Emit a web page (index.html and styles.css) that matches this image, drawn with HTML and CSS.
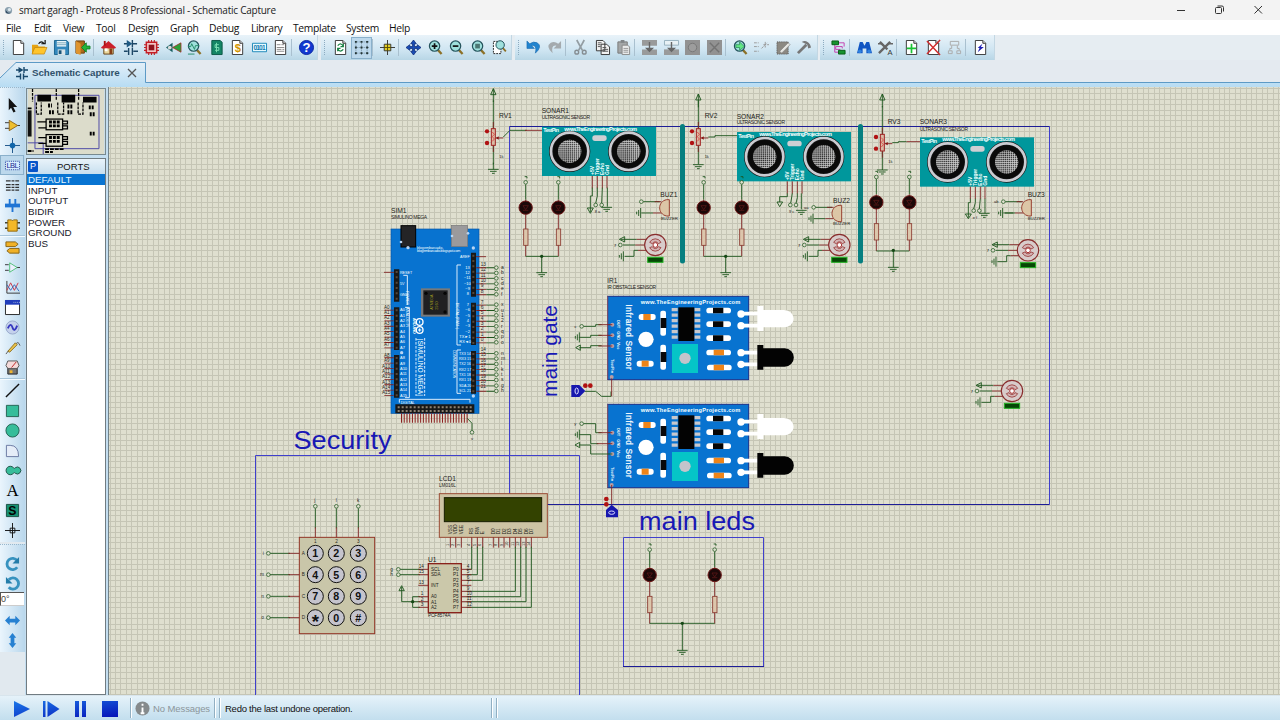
FILE: index.html
```html
<!DOCTYPE html>
<html lang="en">
<head>
<meta charset="utf-8">
<title>smart garagh - Proteus 8 Professional - Schematic Capture</title>
<link rel="stylesheet" href="styles.css">
</head>
<body>
<svg class="defs" width="0" height="0">
<defs>
<symbol id="page" viewBox="0 0 16 16"><path d="M2.5.5h8l3 3v12h-11z" fill="#fff" stroke="#333"/><path d="M10.5.5v3h3" fill="#ddd" stroke="#333"/></symbol>
<symbol id="lens" viewBox="0 0 16 16"><path d="M10 10l4.500 5" stroke="#8c7128" stroke-width="2.400"/><circle cx="7" cy="6.500" r="5.500" fill="#9fe0dc" stroke="#24535c" stroke-width="1.300"/></symbol>
<marker id="term" markerUnits="userSpaceOnUse" markerWidth="16" markerHeight="16" refX="8" refY="8"><circle cx="8" cy="8" r="5.500" fill="#dfdfcf" stroke="#1c551c" stroke-width="2.200"/></marker>
<g id="gnd"><path d="M-16 0H16M-10 6H10M-4 12H4" class="wire"/></g>
<g id="gndl"><path d="M0-15V15M-6-9V9M-12-4V4" class="wire"/></g>
<g id="up"><path d="M0 0l-8 18H8zM0 0V40" class="wire"/></g>
<g id="led"><path d="M0 6V52" class="wire"/><path d="M0 52V76M0 96V222" class="pin"/><circle r="5.500" class="term"/><circle cy="76" r="20" fill="#1c0808" stroke="#6b1515" stroke-width="3"/><path d="M-8 70H8L0 82zM-8 84H8" fill="none" stroke="#641919" stroke-width="2"/><rect x="-6" y="140" width="13" height="49" fill="#dcc6ac" stroke="#8a3a30" stroke-width="2.500"/><path d="M-3-17h7v5" class="wire"/></g>
<g id="rv"><path d="M0-110V-25M0 25V82" class="wire"/><path d="M0-45V45M7 3H30" class="pin"/><rect x="-6" y="-25" width="12" height="50" fill="#d9bba5" stroke="#a02222" stroke-width="3"/><path d="M-3-15L3-8L-3-1L3 6L-3 13" stroke="#d22" stroke-width="2" fill="none"/><circle cx="-19" cy="-17" r="6.500" fill="#b01212"/><circle cx="-19" cy="18" r="6.500" fill="#b01212"/><path d="M8 3l8-5v10z" fill="#811"/></g>
<g id="sonar">
<rect width="342" height="148" fill="#00979c"/>
<text x="67" y="12" class="sw b" font-size="17" textLength="218">www.TheEngineeringProjects.com</text><text x="4" y="17" class="sw b" font-size="16" textLength="47">TestPin</text>
<rect x="151" y="26" width="43" height="17" rx="8" fill="#cfcfd3"/>
<g id="eye"><circle cx="83" cy="74" r="56" fill="#0a0a0a" stroke="#1a1a1a" stroke-width="12"/><circle cx="83" cy="74" r="56" fill="none" stroke="#cbccd2" stroke-width="8"/><circle cx="83" cy="74" r="35" fill="#2a2a2a"/><circle cx="83" cy="74" r="35" fill="url(#mesh)"/></g><use href="#eye" x="177"/>
<g class="sw b" font-size="15"><text transform="translate(157 145)rotate(-90)">+5V</text><text transform="translate(172 145)rotate(-90)">Trigger</text><text transform="translate(187 145)rotate(-90)">Echo</text><text transform="translate(202 145)rotate(-90)">Gnd</text></g>
<path d="M151 148V185M166 148V185M181 148V185M195 148V185" class="pin"/>
</g>
<pattern id="mesh" width="6.200" height="6.200" patternUnits="userSpaceOnUse"><path d="M0 1.500H6.200M1.500 0V6.200" stroke="#d6d6d6" stroke-width="2"/></pattern>
<g id="buz"><circle r="5.500" class="term"/><path d="M6 0H55M0 34H35" class="wire"/><path d="M35 34H60M40 0H60" class="pin"/><use href="#gndl" x="-2" y="34"/><path d="M84-6V43H76C48 38 48-1 76-6z" fill="#dcc6a6" stroke="#984030" stroke-width="3"/></g>
<g id="motor"><path d="M-104-17H-56M-97 0H-60M-92 34H-64V16H-52" class="wire"/><path d="M-56-17H-25M-60 0H-32M-52 16H-26" class="pin"/><path d="M-108-17l16-8v16z" class="wire"/><circle cx="-105" r="5.500" class="term"/><text x="-124" y="5" font-size="12">7</text><use href="#gndl" x="-96" y="34"/><circle r="32" fill="#d8cccb" stroke="#892d2d" stroke-width="3.500"/><path d="M-17-8A19 19 0 0 1 17-8L9-4A10 10 0 0 0-9-4zM-17 8A19 19 0 0 0 17 8L9 5A10 10 0 0 1-9 5z" fill="#d5b3b3" stroke="#963939" stroke-width="2.500"/><circle r="7" fill="#fff" stroke="#a33" stroke-width="3"/><rect x="-23" y="37" width="46" height="15" fill="#064706" stroke="#23b323" stroke-width="3"/></g>
<g id="cap"><rect width="74" height="17" rx="8" fill="#fff"/></g>
<g id="irboard">
<rect x="218" y="64" width="423" height="250" fill="#0873d0" stroke="#19318b" stroke-width="3"/><path d="M218 64V314" stroke="#8e5263" stroke-width="3"/>
<text x="317" y="87" class="sw b" font-size="17" textLength="299">www.TheEngineeringProjects.com</text>
<text transform="translate(273 88)rotate(90)" class="sw heavy" font-size="25" textLength="196">Infrared Sensor</text>
<g class="sw b" font-size="12"><text transform="translate(245 134)rotate(90)">OUT</text><text transform="translate(245 169)rotate(90)">GND</text><text transform="translate(245 202)rotate(90)">Vcc</text><text transform="translate(227 252)rotate(90)">TestPin</text></g>
<g fill="#b99da4"><circle cx="232" cy="149" r="6"/><circle cx="232" cy="181" r="6"/><circle cx="232" cy="213" r="6"/><circle cx="230" cy="306" r="6"/></g>
<rect x="311" y="117" width="51" height="18" rx="8" fill="#fff"/><rect x="325" y="117" width="22" height="18" fill="#ee8418"/><rect x="305" y="257" width="51" height="18" rx="8" fill="#fff"/><rect x="320" y="257" width="21" height="18" fill="#ee8418"/><circle cx="333" cy="193" r="23" fill="#fff"/>
<rect x="376" y="107" width="17" height="75" rx="6" fill="#fff"/><rect x="377" y="129" width="17" height="30" fill="#08080a"/><rect x="376" y="209" width="17" height="75" rx="6" fill="#fff"/><rect x="377" y="231" width="17" height="30" fill="#08080a"/>
<path d="M419 99V192M487 99V192" stroke="#c8c8cc" stroke-width="18" stroke-dasharray="9.500 7"/><rect x="430" y="97" width="48" height="101" fill="#030303"/><rect x="411" y="207" width="78" height="87" fill="#05c5c7"/><circle cx="450" cy="250" r="17" fill="#c4c4cb"/>
<use href="#cap" x="514" y="98"/><use href="#cap" x="514" y="139"/><use href="#cap" x="514" y="181"/><use href="#cap" x="514" y="224"/><use href="#cap" x="516" y="269"/><path d="M534 98h31v17h-31zM534 139h31v17h-31zM534 181h31v17h-31z" fill="#050505"/><path d="M536 224h31v17h-31zM536 269h31v17h-31z" fill="#ee8418"/>
<g stroke="#fff" stroke-width="11"><path d="M618 116H675M618 152H675M618 233H675M618 268H675"/></g><g fill="#fff"><circle cx="618" cy="117" r="11"/><circle cx="618" cy="152" r="11"/><circle cx="618" cy="233" r="11"/><circle cx="618" cy="268" r="11"/><path d="M667 93h18v12h62a29 26 0 0 1 0 52h-62v11h-18z"/></g><path d="M667 210h18v10h64a27 27 0 0 1 0 55h-64v9h-18z" fill="#030303"/>
</g>
</defs>
</svg>

<header class="titlebar">
<svg class="appicon" viewBox="0 0 10 10"><circle cx="5" cy="5" r="4" fill="#8da2b0"/><path d="M2 3a4 4 0 0 0 6 4A4 4 0 0 1 2 7z" fill="#243c55"/><circle cx="6" cy="4" r="1.800" fill="#dce8ee"/></svg>
<h1>smart garagh - Proteus 8 Professional - Schematic Capture</h1>
<svg class="winbtns" viewBox="0 0 100 20"><g fill="none" stroke="#333" stroke-width="1"><path d="M7 10.500h8M84.500 6l7.500 7.500M92 6l-7.500 7.500"/><rect x="45.500" y="7.500" width="6" height="6" rx="1"/><path d="M47.500 6h4.500q1.500 0 1.500 1.500v4"/></g></svg>
</header>
<nav class="menu"><span>File</span><span>Edit</span><span>View</span><span>Tool</span><span>Design</span><span>Graph</span><span>Debug</span><span>Library</span><span>Template</span><span>System</span><span>Help</span></nav>

<div class="toolbars">
<div class="tb g1">
<i><svg viewBox="0 0 16 16"><use href="#page"/></svg></i>
<i><svg viewBox="0 0 16 16"><path d="M0 15V5h6l1 2h7v3" fill="#e6a413"/><path d="M0 15l3-7h13l-3 7z" fill="#ffc52c" stroke="#be810b" stroke-width=".7"/><path d="M7 4q3-4 6 0M10 4h4V0" fill="none" stroke="#111" stroke-width="1.300"/></svg></i>
<i><svg viewBox="0 0 16 16"><path d="M.5.5h13l2 2v13H.5z" fill="#3388bd" stroke="#19638e"/><path d="M3 1h10v6H3z" fill="#e9f5fa"/><path d="M3 3h10M3 5h10" stroke="#7ca7bb"/><path d="M4 10h8v6H4z" fill="#d8e4e9"/><path d="M5 11h3v4H5z" fill="#185478"/></svg></i>
<i><svg viewBox="0 0 16 16"><path d="M1 1h9v13H1z" fill="#b06a1b" stroke="#6a3e0b"/><path d="M1 1l5 3v12l-5-2z" fill="#df942e"/><path d="M16 6.500h-4V3L7 8l5 5V9.500h4z" fill="#25b53a" stroke="#138225"/></svg></i>
<b></b>
<i><svg viewBox="0 0 16 16"><path d="M3 8h10v7H3z" fill="#ead69a" stroke="#624115"/><path d="M0 8l8-7 8 7-1 1H1z" fill="#cc202b"/><path d="M3 1h2v5H3z" fill="#a11"/><path d="M9 9h3v6H9z" fill="#873d15"/><path d="M4 9h3v3H4z" fill="#fff"/></svg></i>
<i><svg viewBox="0 0 16 16"><path d="M1 4h4M10 4h5M1 12h4M11 12h5M10 0v8M6 8.500v7.500M10 8.500v7.500" stroke="#1d4766" stroke-width="1.500"/><path d="M4 0l6 4-6 4z" fill="#205a83"/></svg></i>
<i><svg viewBox="0 0 16 16"><path d="M5 0v16M8 0v16M11 0v16M0 5h16M0 8h16M0 11h16" stroke="#b22" stroke-width="1.200"/><path d="M2.500 2.500h11v11h-11z" fill="#f3c5c5" stroke="#c41d25" stroke-width="1.600"/><path d="M5 5h6v6H5z" fill="#8f111c"/></svg></i>
<i><svg viewBox="0 0 16 16"><path d="M0 8L7 3v10z" fill="#175f60"/><path d="M16 3v10L7 8z" fill="#2aa13a" stroke="#a52323" stroke-width=".8"/><circle cx="4" cy="8" r="2" fill="#ddd"/></svg></i>
<i><svg viewBox="0 0 16 16"><use href="#lens"/><path d="M1 7h3l1-3 3 6 1-4h4M1 15h7" fill="none" stroke="#238b66"/></svg></i>
<i><svg viewBox="0 0 16 16"><path d="M3 .5h9l2 2v13H3z" fill="#158565" stroke="#0b5543"/><path d="M8 3v10M10.500 5H6.500v3h4v3h-4" fill="none" stroke="#7ee0b5"/></svg></i>
<i><svg viewBox="0 0 16 16"><use href="#page"/><text x="5" y="12.500" font-size="12" font-weight="bold" fill="#d29400">$</text></svg></i>
<i><svg viewBox="0 0 16 16"><path d="M.5 3.500h15v9H.5z" fill="#e7faff" stroke="#1885b8"/><text x="1.500" y="10.500" font-size="7" font-weight="bold" fill="#107ab1" textLength="13">0101</text></svg></i>
<i><svg viewBox="0 0 16 16"><use href="#page"/><path d="M4 5h4M9 5h3M4 8h8M4 10h5M10 10h2M4 12h8" stroke="#888"/></svg></i>
<b></b>
<i><svg viewBox="0 0 16 16"><circle cx="8" cy="8" r="7.500" fill="#1238d0" stroke="#0823a0"/><text x="3.800" y="13" font-size="14" font-weight="bold" fill="#fff">?</text></svg></i>
</div>
<div class="tb g2">
<i><svg viewBox="0 0 16 16"><use href="#page"/><path d="M5 6q4-4 6 1M11 4v3H8M11 10q-4 4-6-1M5 12V9h3" fill="none" stroke="#178042" stroke-width="1.300"/></svg></i>
<i class="on"><svg viewBox="0 0 16 16"><path d="M1 2h15M1 8h15M1 14h15M2 1v15M8 1v15M14 1v15" stroke="#718a9e" stroke-dasharray="1 1"/><path d="M1 2h15M1 8h15M1 14h15" stroke="#233" stroke-width="2" stroke-dasharray="2 4"/></svg></i>
<b></b>
<i><svg viewBox="0 0 16 16"><path d="M0 8h16M8 0v16" stroke="#333"/><path d="M4.500 4.500h7v7h-7z" fill="#e5cf22" stroke="#333"/><path d="M4 8h8M8 4v8" stroke="#554c05"/></svg></i>
<b></b>
<i><svg viewBox="0 0 16 16"><path d="M8 0l3 4H9v3h3V5l4 3-4 3V9H9v3h2l-3 4-3-4h2V9H4v2L0 8l4-3v2h3V4H5z" fill="#194eb8" stroke="#0b2774" stroke-width=".8"/></svg></i>
<i><svg viewBox="0 0 16 16"><use href="#lens"/><path d="M4 6.500h6M7 3.500v6" stroke="#111" stroke-width="1.800"/></svg></i>
<i><svg viewBox="0 0 16 16"><use href="#lens"/><path d="M4 6.500h6" stroke="#111" stroke-width="1.800"/></svg></i>
<i><svg viewBox="0 0 16 16"><use href="#lens"/><path d="M4.500 4h5v5h-5z" fill="#4c7773"/></svg></i>
<i><svg viewBox="0 0 16 16"><path d="M1.500 1.500h8v13h-8z" fill="#fff" stroke="#222" stroke-dasharray="2 1"/><use href="#lens" x="3" y="0" width="13" height="13"/></svg></i>
</div>
<div class="tb g3">
<i><svg viewBox="0 0 16 16"><path d="M1 1v8h8L6 6q6-1 4 8 8-7 2-11Q8 1 4 4z" fill="#2184cf" stroke="#1765ac" stroke-width=".6"/></svg></i>
<i><svg viewBox="0 0 16 16"><path d="M15 1v8H7l3-3q-6-1-4 8-8-7-2-11Q8 1 12 4z" fill="#a4aaae"/></svg></i>
<b></b>
<i><svg viewBox="0 0 16 16"><path d="M4 0l6 11M12 0L6 11" stroke="#939da3" stroke-width="1.800"/><circle cx="4" cy="13" r="2" fill="none" stroke="#858d92" stroke-width="1.500"/><circle cx="12" cy="13" r="2" fill="none" stroke="#858d92" stroke-width="1.500"/></svg></i>
<i><svg viewBox="0 0 16 16"><path d="M1.500.5h7l2 2v9h-9zM6.500 4.500h6l3 3v8h-9z" fill="#f2f2f2" stroke="#333"/><path d="M3 3h4M3 5h3M3 7h3M8 8h4M8 10h6M8 12h6" stroke="#555"/></svg></i>
<i><svg viewBox="0 0 16 16"><path d="M2 2h10v12H2z" fill="#a4a7a8" stroke="#777"/><path d="M5 0h4v3H5z" fill="#818588"/><path d="M6.500 5.500h6l2 2v8h-8z" fill="#e9eaea" stroke="#888"/><path d="M8 9h5M8 11h5M8 13h5" stroke="#999"/></svg></i>
<b></b>
<i><svg viewBox="0 0 16 16"><path d="M0 0h16v6H0zM0 10h16v6H0z" fill="#999a9a"/><path d="M8 2v10M5 9h6l-3 3z" stroke="#666" fill="#666" stroke-width="1.500"/></svg></i>
<i><svg viewBox="0 0 16 16"><path d="M.5.500h15v5H.500z" fill="#e8f1f5" stroke="#95b0bd"/><path d="M0 10h16v6H0z" fill="#999a9a"/><path d="M8 2v10M5 9h6l-3 3z" stroke="#666" fill="#666" stroke-width="1.500"/></svg></i>
<i><svg viewBox="0 0 16 16"><path d="M0 0h16v16H0z" fill="#929292"/><circle cx="8" cy="8" r="4.500" fill="#9d9d9d" stroke="#777"/></svg></i>
<i><svg viewBox="0 0 16 16"><path d="M0 0h16v16H0z" fill="#929292"/><path d="M3 3l10 10M13 3L3 13" stroke="#737373" stroke-width="1.500"/></svg></i>
<b></b>
<i><svg viewBox="0 0 16 16"><use href="#lens"/><path d="M3 5h4V2l5 5-5 4V8H3z" fill="#62e886" stroke="#14723c" stroke-width=".6"/></svg></i>
<i><svg viewBox="0 0 16 16"><path d="M0 3h5M0 7h5M0 12h5M8 9l6-6M10 5h6M12 2v6" stroke="#999" stroke-dasharray="3 1"/></svg></i>
<i><svg viewBox="0 0 16 16"><path d="M1 2h12v13H1z" fill="#8c8982" stroke="#555" stroke-dasharray="1 1"/><path d="M4 12l9-9 2 2-9 9z" fill="#e6e6e1" stroke="#777" stroke-width=".6"/></svg></i>
<i><svg viewBox="0 0 16 16"><path d="M1 14L10 5" stroke="#777" stroke-width="3"/><path d="M5 2q5-3 9 3l1 3-3 1-1-4-4-2z" fill="#777"/></svg></i>
</div>
<div class="tb g4">
<i><svg viewBox="0 0 16 16"><path d="M4 4v9h7M12 9V7H5v3h5M7 3h7v4" fill="none" stroke="#c33dae"/><path d="M1 1h7v4H1zM8 11h7v4H8z" fill="#17922f" stroke="#065c15"/></svg></i>
<b></b>
<i><svg viewBox="0 0 16 16"><path d="M3 2h3l2 4 2-4h3l3 12h-6V9H6v5H0z" fill="#1055c3"/><circle cx="3" cy="12" r="2" fill="#2e81df"/><circle cx="13" cy="12" r="2" fill="#2e81df"/></svg></i>
<i><svg viewBox="0 0 16 16"><path d="M1 14L13 2M2 2l8 8" stroke="#666" stroke-width="2.500"/><path d="M0 4h5M11 4h5" stroke="#666" stroke-width="1.500"/><text x="10" y="16" font-size="8" fill="#333">A</text></svg></i>
<b></b>
<i><svg viewBox="0 0 16 16"><use href="#page"/><path d="M3 9h10M8 4v10" stroke="#1bc335" stroke-width="1.800"/></svg></i>
<i><svg viewBox="0 0 16 16"><use href="#page"/><path d="M1 1l14 15M15 0L1 15" stroke="#d12d2d" stroke-width="1.500"/></svg></i>
<i><svg viewBox="0 0 16 16"><path d="M3.500 1.500h9v4h-9zM1.500 11.500h4v3h-4zM10.500 11.500h4v3h-4zM5 6v3H3v2M11 6v3h2v2" fill="none" stroke="#aaa"/></svg></i>
<b></b>
<i><svg viewBox="0 0 16 16"><use href="#page"/><path d="M10 4L8.500 7.500h3L5 13l2-4.500H5z" fill="#1f20b4"/></svg></i>
</div>
</div>

<div class="tabs"><svg class="tabshape" viewBox="0 0 1280 27" preserveAspectRatio="none"><defs><linearGradient id="tabg" x2="0" y2="1"><stop stop-color="#e3eff8"/><stop offset="1" stop-color="#b7dcf3"/></linearGradient></defs><path d="M0 18L16 2.500H145.500V22.500H1280V27H0z" fill="url(#tabg)"/><path d="M0 18L16 2.500H145.500V22.500H1280" fill="none" stroke="#5d9ac6"/></svg>
<div class="tab"><svg viewBox="0 0 12 14"><path d="M0 4h3M8 4h4M0 10.500h4M8 10.500h4M8 1v6M4.500 7.500v6M7.500 7.500v6" stroke="#17476b" stroke-width="1.400"/><path d="M2.500 1l5 3-5 3z" fill="#17476b"/></svg><strong>Schematic Capture</strong><svg class="x" viewBox="0 0 10 10"><path d="M1 1l8 8M9 1L1 9" stroke="#555" stroke-width="1.300"/></svg></div></div>

<main>
<aside class="tools">
<div class="tg">
<i><svg viewBox="0 0 16 16"><path d="M4 0l9 9.500H8.800l2.500 5-2.300 1-2.500-5L4 13z" fill="#111"/></svg></i>
<i><svg viewBox="0 0 16 16"><path d="M0 5h5M0 11h5M12 8h4" stroke="#333"/><path d="M4.500 2.500l9 5.500-9 5.500z" fill="#efbf2e" stroke="#8e651b"/></svg></i>
<i><svg viewBox="0 0 16 16"><path d="M0 8h16M8 0v16" stroke="#1a5287"/><circle cx="8" cy="8" r="3" fill="#1266a9"/></svg></i>
<i class="on"><svg viewBox="0 0 16 16"><path d="M.5 3.500h15v9H.5z" fill="#d7edff" stroke="#233d9c" stroke-dasharray="1 1"/><text x="1.500" y="11" font-size="8" fill="#1c258f" textLength="13">LBL</text></svg></i>
<i><svg viewBox="0 0 16 16"><path d="M1 3h14M1 7h14M1 10h14M1 13h14" stroke="#333" stroke-width="1.400" stroke-dasharray="5 1 3 1"/></svg></i>
<i><svg viewBox="0 0 16 16"><path d="M0 8h16" stroke="#2075d4" stroke-width="4"/><path d="M5 1v8M11 1v8M8 8v7" stroke="#2075d4" stroke-width="2"/></svg></i>
<i><svg viewBox="0 0 16 16"><path d="M0 5h16M0 11h16" stroke="#443" stroke-width="1.500"/><path d="M3 2h4q1 2 2 0h4v12H3z" fill="#f3b828" stroke="#8d640c"/></svg></i><b></b>
<i><svg viewBox="0 0 16 16"><path d="M1 2h10l3 2.500-3 2.500H1zM5 9h10v5H5l-3-2.500z" fill="#f0b127" stroke="#856215"/></svg></i>
<i><svg viewBox="0 0 16 16"><path d="M0 5h4M0 11h4M12 8h4" stroke="#333"/><path d="M5 3l8 5-8 5z" fill="#eef" stroke="#4dc075"/></svg></i>
<i><svg viewBox="0 0 16 16"><path d="M2 1v13h14" fill="none" stroke="#333"/><path d="M2 11l4-8 4 8 4-8" fill="none" stroke="#c34"/><path d="M2 5l4 6 4-6 5 7" fill="none" stroke="#36b"/></svg></i>
<i><svg viewBox="0 0 16 16"><path d="M.5.500h15v15H.500z" fill="#fff" stroke="#222"/><path d="M0 0h16v5H0z" fill="#213dbb"/><path d="M9 2.500h7" stroke="#abd" stroke-dasharray="1 1"/></svg></i>
<i><svg viewBox="0 0 16 16"><circle cx="8" cy="8" r="7" fill="#c4d1ec" stroke="#97a9cb"/><path d="M3 9q3-7 5-1t5-2" fill="none" stroke="#3537bf" stroke-width="2"/></svg></i>
<i><svg viewBox="0 0 16 16"><path d="M1 15l3-4M11 5q3-5 5 1" fill="none" stroke="#555"/><path d="M3 12l8-9 2 2-8 8z" fill="#eac24a" stroke="#8d7125"/></svg></i>
<i><svg viewBox="0 0 16 16"><path d="M3 6h10v9H3z" fill="#767676" stroke="#222"/><path d="M1 6l2-5h10l2 5-2 3H3z" fill="#f4dada" stroke="#555"/><path d="M7 8l5-6" stroke="#b22"/><path d="M5 11h3v3H5z" fill="#efb42f"/></svg></i><b></b>
<i><svg viewBox="0 0 16 16"><path d="M1 15L15 1" stroke="#111" stroke-width="1.500"/></svg></i>
<i><svg viewBox="0 0 16 16"><path d="M1.500 2.500h13v12h-13z" fill="#36bd9a" stroke="#236151"/></svg></i>
<i><svg viewBox="0 0 16 16"><circle cx="8" cy="8" r="7" fill="#36bd9a" stroke="#236151"/></svg></i>
<i><svg viewBox="0 0 16 16"><path d="M1.500 14.500V2.500h4q9 0 9 12z" fill="#e5edf8" stroke="#6876a0"/></svg></i>
<i><svg viewBox="0 0 16 16"><path d="M9 5a4.500 4.500 0 1 0 0 6q1-1.500 2 0a3.700 3.700 0 1 0 0-6q-1 1.500-2 0z" fill="#36bd9a" stroke="#1d4e43"/></svg></i>
<i><svg viewBox="0 0 16 16"><text class="serif" x="1.500" y="14" font-size="18">A</text></svg></i>
<i><svg viewBox="0 0 16 16"><path d="M1.500 1.500h13v13h-13z" fill="#159172" stroke="#174d40"/><text x="3.500" y="13" font-size="13" font-weight="bold">S</text></svg></i>
<i><svg viewBox="0 0 16 16"><path d="M0 8h16M8 0v16M5.500 5.500h5v5h-5z" fill="none" stroke="#111"/></svg></i>
</div>
<div class="tg t2">
<i><svg viewBox="0 0 16 16"><path d="M13 12a6 6 0 1 1 0-7" fill="none" stroke="#3792bf" stroke-width="3"/><path d="M15 1v7H8z" fill="#237ca9"/></svg></i>
<i><svg viewBox="0 0 16 16"><path d="M4 12a6 6 0 1 0 0-8" fill="none" stroke="#3792bf" stroke-width="3"/><path d="M1 1v7h7z" fill="#237ca9"/></svg></i>
<div class="angle">0°</div>
<i><svg viewBox="0 0 16 16"><path d="M0 8l5-5v3h6V3l5 5-5 5v-3H5v3z" fill="#2680d1"/></svg></i>
<i><svg viewBox="0 0 16 16"><path d="M8 0l4 5h-2v6h2l-4 5-4-5h2V5H4z" fill="#2680d1"/></svg></i>
</div>
</aside>
<section class="panel">
<svg class="overview" viewBox="0 0 79 67"><rect width="79" height="67" fill="#dcdccb"/><path d="M7.500 6.500H73.500V61.500H7.500zM0 55.500H16V67" fill="none" stroke="#4c48a5"/><g fill="#050505"><path d="M10 6h14v7H10zM35 6h14v8H35zM57 8h14v6H57z"/></g><g fill="none" stroke="#000" stroke-width="1.300"><path d="M5 0v13M29.500 0v11M52.500 0v11M9 14v12h5V14M31 14v12h6V14M52 14v12h5V14" stroke-dasharray="3 1"/><rect x="19" y="31" width="17" height="11"/><rect x="19" y="47" width="17" height="12"/><path d="M36 33h5v3h-5M36 38h5v3h-5M36 49h5v3h-5M36 54h5v3h-5M10 34h9M11 40h8M11 50h8M11 56h8"/><path d="M22 34h12M22 38h12M22 50h12M22 54h12" stroke-width="3" stroke-dasharray="3 1"/><path d="M21 17h4M22 24h5M41 18h6M41 24h6M63 19h6M64 26h6M64 46h6" stroke-width="4" stroke-dasharray="2 1"/><path d="M0 20h4M0 64h6M18 62h20M18 65h8" stroke-width="2" stroke-dasharray="4 1"/></g><path d="M0 22h4v27H0z" fill="#111"/></svg>
<div class="ports"><div class="ph"><em>P</em><span>PORTS</span></div>
<ul><li class="sel">DEFAULT</li><li>INPUT</li><li>OUTPUT</li><li>BIDIR</li><li>POWER</li><li>GROUND</li><li>BUS</li></ul></div>
</section>
<section class="canvas">
<svg class="sheet" viewBox="109 87 1171 608">
<g shape-rendering="crispEdges" stroke="#c5c5b5"><path d="M109.500 391H1280" stroke-width="608" stroke-dasharray="1 4.410"/><path d="M694.500 88V695" stroke-width="1171" stroke-dasharray="1 4.410"/></g>
<g class="frame"><path d="M509.500 494V126.500M1049.500 126.500V504.500" /><path d="M509.500 126.500H1049.500M547 504.500H1049.500" stroke="#1c1c96"/><path d="M255.500 696V455.500H579.500V696M623.500 666.500V537.500H763.500V666.500" /><path d="M623 666.500H764" stroke="#1c1c96"/></g>
<g class="big"><text x="293.500" y="449" font-size="25.500" textLength="98" lengthAdjust="spacingAndGlyphs">Security</text><text x="639" y="529.500" font-size="26" textLength="116" lengthAdjust="spacingAndGlyphs">main leds</text><text transform="translate(556.500 397)rotate(-90)" font-size="20.500" textLength="92" lengthAdjust="spacingAndGlyphs">main gate</text></g>

<g transform="translate(480 86)scale(.33333)">
<use href="#sonar" x="186" y="122"/><use href="#rv" x="40" y="153"/><path d="M70 153L90 133H140" class="wire"/><path d="M135 133H186" class="pin"/><use href="#up" x="40" y="8"/><use href="#gnd" x="40" y="250"/><path d="M40 230V250" class="wire"/>
<text x="57" y="97" font-size="20">RV1</text><text x="185" y="82" font-size="20">SONAR1</text><text x="185" y="100" font-size="15" textLength="145">ULTRASONIC SENSOR</text><text x="58" y="216" font-size="12">1k</text>
<use href="#led" x="137" y="289"/><use href="#led" x="235" y="289"/><path d="M137 511H235M185 511V560" class="wire"/><use href="#gnd" x="185" y="560"/><circle cx="185" cy="511" r="5" fill="#154715"/>
<path d="M337 305V330H331V378M322 366H340L331 382zM352 305V330L347 352M367 305L365 352M382 305V362" class="wire"/><circle cx="347" cy="357" r="5.500" class="term"/><circle cx="365" cy="357" r="5.500" class="term"/><use href="#gnd" x="380" y="364"/><text x="344" y="382" font-size="12">8 a</text>
<use href="#buz" x="484" y="347"/><text x="541" y="334" font-size="20">BUZ1</text><text x="542" y="401" font-size="13">BUZZER</text><use href="#motor" x="526" y="477"/>
</g>
<g transform="translate(680 86)scale(.33333)">
<use href="#sonar" x="171" y="138"/><use href="#rv" x="55" y="153"/><path d="M85 153H105V149H171" class="wire"/><use href="#up" x="55" y="24"/><use href="#gnd" x="55" y="236"/>
<text x="74" y="97" font-size="20">RV2</text><text x="170" y="98" font-size="20">SONAR2</text><text x="170" y="115" font-size="15" textLength="145">ULTRASONIC SENSOR</text><text x="74" y="216" font-size="12">1k</text>
<use href="#led" x="71" y="289"/><use href="#led" x="185" y="289"/><path d="M71 511H185M137 511V560" class="wire"/><use href="#gnd" x="137" y="560"/><circle cx="137" cy="511" r="5" fill="#154715"/>
<path d="M322 322V332H299V348M291 348H308L299 362zM337 322L332 352M352 322V335L348 352M364 322V370" class="wire"/><circle cx="331" cy="357" r="5.500" class="term"/><circle cx="348" cy="357" r="5.500" class="term"/><use href="#gnd" x="364" y="373"/><text x="327" y="382" font-size="12">9 c</text>
<use href="#buz" x="401" y="364"/><text x="459" y="350" font-size="20">BUZ2</text><text x="459" y="418" font-size="13">BUZZER</text><text x="372" y="369" font-size="12">aa</text><use href="#motor" x="478" y="477"/>
<use href="#sonar" x="720" y="154"/><use href="#rv" x="607" y="170"/><path d="M637 170H655V167H680" class="wire"/><path d="M680 167H720" class="pin"/><use href="#up" x="607" y="24"/><use href="#gnd" x="607" y="252"/>
<text x="623" y="113" font-size="20">RV3</text><text x="719" y="113" font-size="20">SONAR3</text><text x="719" y="134" font-size="15" textLength="145">ULTRASONIC SENSOR</text><text x="625" y="232" font-size="12">1k</text>
<use href="#led" x="589" y="273"/><use href="#led" x="688" y="273"/><path d="M589 495H688M640 495V544" class="wire"/><use href="#gnd" x="640" y="544"/><circle cx="640" cy="493" r="5" fill="#154715"/>
<path d="M871 338V350H865V395M856 384H874L865 398zM886 338V350L881 369M901 338L898 369M915 338V382" class="wire"/><circle cx="881" cy="374" r="5.500" class="term"/><circle cx="898" cy="374" r="5.500" class="term"/><use href="#gnd" x="913" y="382"/><text x="878" y="398" font-size="12">e f</text>
<use href="#buz" x="970" y="347"/><path d="M975 381H1000" class="wire"/><text x="1043" y="334" font-size="20">BUZ3</text><text x="1043" y="401" font-size="13">BUZZER</text><text x="942" y="352" font-size="12">ab</text><use href="#motor" x="1044" y="493"/><use href="#motor" x="996" y="915"/>
</g>
<g stroke="#067f80" stroke-width="5" stroke-linecap="round"><path d="M682.500 126.500V261M860.500 126.500V261"/></g>

<g transform="translate(370 200)scale(.33333)">
<text x="63" y="39" font-size="20">SIM1</text><text x="63" y="58" font-size="15" textLength="108">SIMULINO MEGA</text>
<rect x="63" y="87" width="264" height="553" fill="#0873d0" stroke="#0756a8" stroke-width="2"/><rect x="93" y="77" width="44" height="64" fill="#242426" stroke="#000" stroke-width="3"/><rect x="244" y="76" width="49" height="64" fill="#9b9a9c" stroke="#777" stroke-width="2"/><g fill="#b9d5f3"><circle cx="310" cy="144" r="5"/><circle cx="95" cy="458" r="5"/><circle cx="310" cy="588" r="5"/><circle cx="114" cy="143" r="5"/><circle cx="93" cy="126" r="4"/><circle cx="246" cy="108" r="4"/><circle cx="294" cy="100" r="4"/></g>
<g class="sw" font-size="11"><text x="141" y="147">blogembarcado.</text><text x="141" y="157" textLength="130">blogembarcado.blogspot.com</text></g>
<g fill="#181818"><path d="M72 208h16v97H72zM72 322h16v128H72zM72 465h16v128H72zM303 158h15v132h-15zM303 308h15v127h-15zM303 453h15v128h-15zM76 613h237v27H76z"/></g>
<g stroke="#54483c" stroke-width="6" stroke-dasharray="6 10"><path d="M80 213V305M80 328V450M80 471V593M310 164V290M310 314V435M310 459V581"/><path d="M83 622H308M83 633H308" stroke="#8e8272" stroke-dasharray="6 6"/></g>
<rect x="153" y="265" width="87" height="85" fill="#77797b"/><rect x="160" y="271" width="73" height="73" fill="#202022"/><g fill="#050505"><circle cx="168" cy="280" r="5"/><circle cx="225" cy="280" r="5"/><circle cx="225" cy="336" r="5"/></g><g class="chip" font-size="11"><text transform="translate(190 329)rotate(-90)">ATMEGA</text><text transform="translate(203 329)rotate(-90)">2560</text></g>
<g fill="none" stroke="#fff" stroke-width="4"><circle cx="149" cy="366" r="10"/><circle cx="149" cy="390" r="10"/><path d="M149 362v8M144 390h10M149 385v10" stroke-width="3"/></g><text class="sw b" transform="translate(128 354)rotate(90)" font-size="12" textLength="48">ARDUINO</text>
<path d="M138 414V588M164 414V588" stroke="#d7ebff" stroke-width="3" stroke-dasharray="8 4"/><text transform="translate(143 416)rotate(90)" class="sw" font-size="22" textLength="172" lengthAdjust="spacingAndGlyphs">|SIMULINO MEGA|</text>
<g fill="none" stroke="#dbecfb" stroke-width="3"><path d="M100 226H112V315M105 322H118V593H105M273 195H261V435H273M273 450H261V580H273M88 608V598H300V608"/></g>
<g class="sw" font-size="11"><text x="90" y="222">RESET</text><text x="90" y="254">5V</text><text x="90" y="287">GND</text><text x="92" y="612">DIGITAL</text><text transform="translate(109 274)rotate(90)">POWER</text><text transform="translate(107 322)rotate(90)">ANALOG IN</text><text transform="translate(259 308)rotate(90)" textLength="80">DIGITAL (PWM~)</text><text transform="translate(250 450)rotate(90)" textLength="85">COMMUNICATION</text>
<text x="90" y="334" font-size="12">A0<tspan x="90" dy="16">A1</tspan><tspan x="90" dy="16">A2</tspan><tspan x="90" dy="16">A3</tspan><tspan x="90" dy="16">A4</tspan><tspan x="90" dy="16">A5</tspan><tspan x="90" dy="16">A6</tspan><tspan x="90" dy="16">A7</tspan><tspan x="90" dy="32">A8</tspan><tspan x="90" dy="16">A9</tspan><tspan x="90" dy="16">A10</tspan><tspan x="90" dy="16">A11</tspan><tspan x="90" dy="16">A12</tspan><tspan x="90" dy="16">A13</tspan><tspan x="90" dy="16">A14</tspan><tspan x="90" dy="16">A15</tspan></text>
<text x="270" y="173">AREF</text><text x="286" y="206" font-size="12">13<tspan x="286" dy="16">12</tspan><tspan x="282" dy="16">~11</tspan><tspan x="282" dy="16">~10</tspan><tspan x="286" dy="16">~9</tspan><tspan x="290" dy="16">8</tspan><tspan x="290" dy="32">7</tspan><tspan x="286" dy="16">~6</tspan><tspan x="286" dy="16">~5</tspan><tspan x="290" dy="16">4</tspan><tspan x="286" dy="16">~3</tspan><tspan x="286" dy="16">~2</tspan><tspan x="268" dy="16">TX►1</tspan><tspan x="268" dy="16">RX◄0</tspan></text>
<text x="267" y="464">TX3 14<tspan x="267" dy="16">RX3 15</tspan><tspan x="267" dy="16">TX2 16</tspan><tspan x="267" dy="16">RX2 17</tspan><tspan x="267" dy="16">TX1 18</tspan><tspan x="267" dy="16">RX1 19</tspan><tspan x="267" dy="16">SDA 20</tspan><tspan x="267" dy="16">SCL 21</tspan></text></g>
<g font-size="14"><text x="42" y="326">A0<tspan x="42" dy="16">A1</tspan><tspan x="42" dy="16">A2</tspan><tspan x="42" dy="16">A3</tspan><tspan x="42" dy="16">A4</tspan><tspan x="42" dy="16">A5</tspan><tspan x="42" dy="16">A6</tspan><tspan x="42" dy="16">A7</tspan><tspan x="42" dy="33">A8</tspan><tspan x="42" dy="16">A9</tspan><tspan x="36" dy="16">A10</tspan><tspan x="36" dy="16">A11</tspan><tspan x="36" dy="16">A12</tspan><tspan x="36" dy="16">A13</tspan><tspan x="36" dy="16">A14</tspan><tspan x="36" dy="16">A15</tspan></text>
<text x="332" y="198">13<tspan x="332" dy="16">12</tspan><tspan x="332" dy="16">11</tspan><tspan x="332" dy="16">10</tspan><tspan x="332" dy="16">9</tspan><tspan x="332" dy="16">8</tspan><tspan x="332" dy="33">7</tspan><tspan x="332" dy="16">6</tspan><tspan x="332" dy="16">5</tspan><tspan x="332" dy="16">4</tspan><tspan x="332" dy="16">3</tspan><tspan x="332" dy="16">2</tspan><tspan x="332" dy="16">1</tspan><tspan x="332" dy="16">0</tspan><tspan x="332" dy="30">14</tspan><tspan x="332" dy="16">15</tspan><tspan x="332" dy="16">16</tspan><tspan x="332" dy="16">17</tspan><tspan x="332" dy="16">18</tspan><tspan x="332" dy="16">19</tspan><tspan x="332" dy="16">20</tspan><tspan x="332" dy="16">21</tspan></text></g>
<g stroke="#7e1c1c" stroke-dasharray="2.500 13.700"><path d="M57 329V446M57 472V588" stroke-width="28"/><path d="M334 202V286M334 314V430M334 459V575" stroke-width="30"/></g><g stroke="#1c551c" stroke-dasharray="2.500 13.700"><path d="M361 202V286M361 314V430M361 459V575" stroke-width="24"/></g><path d="M42 217H72M318 170H348" class="pin"/>
<path d="M379 203V219V235V251V267V283V314V330V346V362V379V395V411V427V460V476V492V508V524V540V557V573" fill="none" marker-start="url(#term)" marker-mid="url(#term)" marker-end="url(#term)"/>
<text x="393" y="207" font-size="15">a<tspan x="393" dy="16">b</tspan><tspan x="393" dy="16">c</tspan><tspan x="393" dy="16">d</tspan><tspan x="393" dy="16">e</tspan><tspan x="393" dy="16">f</tspan><tspan x="393" dy="32">x</tspan><tspan x="393" dy="16">u</tspan><tspan x="393" dy="16">1</tspan><tspan x="393" dy="16">2</tspan><tspan x="393" dy="16">r</tspan><tspan x="393" dy="16">q</tspan><tspan x="393" dy="16">p</tspan><tspan x="393" dy="16">o</tspan><tspan x="393" dy="33">n</tspan><tspan x="393" dy="16">m</tspan><tspan x="393" dy="16">l</tspan><tspan x="393" dy="16">k</tspan><tspan x="393" dy="16">t</tspan><tspan x="393" dy="16">s</tspan><tspan x="393" dy="16">g</tspan><tspan x="393" dy="16">h</tspan></text>
<path d="M93 654H294" stroke="#8b2020" stroke-width="28" stroke-dasharray="3 5.200"/><path d="M292 655L306 670V692" class="wire"/><circle cx="306" cy="697" r="5.500" class="term"/><text x="303" y="720" font-size="13">v</text>
</g>

<g transform="translate(535 275)scale(.33333)">
<text x="217" y="24" font-size="19">IR1</text><text x="217" y="43" font-size="15" textLength="146">IR OBSTACLE SENSOR</text>
<use href="#irboard"/><use href="#irboard" y="324"/>
<path d="M146 154H182V149H200M133 187H167V181H200M133 218H167V212H200M200 364H228V350M150 349H182L200 364" class="wire"/><path d="M190 149H232M190 181H232M190 213H232M230 310V364" class="pin"/><circle cx="140" cy="154" r="5.500" class="term"/><use href="#gndl" x="133" y="187"/><path d="M122 218l14-8v16z" class="wire"/>
<path d="M109 330H133L151 348 133 366H109z" fill="#1717ae"/><ellipse cx="125" cy="348" rx="5" ry="9" fill="none" stroke="#dcdcff" stroke-width="3"/><circle cx="151" cy="332" r="7" fill="#b01212"/><circle cx="166" cy="332" r="7" fill="#b01212"/>
<path d="M146 446H182V473H200M133 479H167V506H190M133 510H167V537H232" class="wire"/><path d="M190 473H232M185 506H232M230 630V688" class="pin"/><circle cx="140" cy="446" r="5.500" class="term"/><use href="#gndl" x="133" y="479"/><path d="M120 510l14-8v16z" class="wire"/><text x="118" y="158" font-size="12">x</text><text x="118" y="450" font-size="12">y</text>
<path d="M213 727V705L230 689 249 705V727z" fill="#1717ae"/><ellipse cx="230" cy="713" rx="9" ry="5" fill="none" stroke="#dcdcff" stroke-width="3"/><circle cx="214" cy="672" r="7" fill="#b01212"/><circle cx="214" cy="688" r="7" fill="#b01212"/>
</g>

<g transform="translate(250 465)scale(.33333)">
<rect x="148" y="217" width="226" height="289" fill="#c9c6a9" stroke="#923526" stroke-width="3"/>
<path d="M196 130V190M259 130V190M325 130V190M60 265H120M60 329H120M60 394H120M60 458H120" class="wire"/><path d="M196 187V217M259 187V217M325 187V217M115 265H148M115 329H148M115 394H148M115 458H148" class="pin"/>
<path d="M196 124H259H325" fill="none" marker-start="url(#term)" marker-mid="url(#term)" marker-end="url(#term)"/><path d="M55 265V329V394V458" fill="none" marker-start="url(#term)" marker-mid="url(#term)" marker-end="url(#term)"/>
<g font-size="14"><text x="193" y="110">j</text><text x="257" y="110">l</text><text x="321" y="110">k</text><text x="38" y="269">i</text><text x="30" y="333">m</text><text x="34" y="398">n</text><text x="34" y="462">o</text><text x="155" y="270">A</text><text x="155" y="334">B</text><text x="155" y="399">C</text><text x="155" y="463">D</text><text x="192" y="234">1</text><text x="256" y="234">2</text><text x="321" y="234">3</text></g>
<g fill="#c5c4cd" stroke="#111" stroke-width="3"><circle cx="196" cy="265" r="24"/><circle cx="259" cy="265" r="24"/><circle cx="325" cy="265" r="24"/><circle cx="196" cy="329" r="24"/><circle cx="259" cy="329" r="24"/><circle cx="325" cy="329" r="24"/><circle cx="196" cy="394" r="24"/><circle cx="259" cy="394" r="24"/><circle cx="325" cy="394" r="24"/><circle cx="196" cy="458" r="24"/><circle cx="259" cy="458" r="24"/><circle cx="325" cy="458" r="24"/></g>
<g class="key"><text x="196" y="277">1</text><text x="259" y="277">2</text><text x="325" y="277">3</text><text x="196" y="341">4</text><text x="259" y="341">5</text><text x="325" y="341">6</text><text x="196" y="406">7</text><text x="259" y="406">8</text><text x="325" y="406">9</text><text class="star" x="196" y="489">*</text><text x="259" y="470">0</text><text x="325" y="470">#</text></g>
<text x="567" y="47" font-size="20">LCD1</text><text x="567" y="65" font-size="14">LM016L</text>
<rect x="568" y="86" width="324" height="131" fill="#cdc4a5" stroke="#9a4c35" stroke-width="3"/><rect x="583" y="98" width="292" height="72" fill="#334200" stroke="#161d00" stroke-width="3"/>
<g font-size="14"><text transform="translate(606 208)rotate(-90)">VSS</text><text transform="translate(622 208)rotate(-90)">VDD</text><text transform="translate(639 208)rotate(-90)">VEE</text><text transform="translate(670 208)rotate(-90)">RS</text><text transform="translate(687 208)rotate(-90)">RW</text><text transform="translate(703 208)rotate(-90)">E</text><text transform="translate(735 208)rotate(-90)">D0</text><text transform="translate(751 208)rotate(-90)">D1</text><text transform="translate(767 208)rotate(-90)">D2</text><text transform="translate(784 208)rotate(-90)">D3</text><text transform="translate(801 208)rotate(-90)">D4</text><text transform="translate(817 208)rotate(-90)">D5</text><text transform="translate(833 208)rotate(-90)">D6</text><text transform="translate(849 208)rotate(-90)">D7</text></g>
<path d="M601 217V248M617 217V248M634 217V248M665 217V248M682 217V248M698 217V248M730 217V248M746 217V248M762 217V248M779 217V248M796 217V248M812 217V248M828 217V248M844 217V248" class="pin"/>
<g font-size="12"><text transform="translate(597 243)rotate(-90)">1</text><text transform="translate(613 243)rotate(-90)">2</text><text transform="translate(630 243)rotate(-90)">3</text><text transform="translate(661 243)rotate(-90)">4</text><text transform="translate(678 243)rotate(-90)">5</text><text transform="translate(694 243)rotate(-90)">6</text><text transform="translate(726 243)rotate(-90)">7</text><text transform="translate(742 243)rotate(-90)">8</text><text transform="translate(758 243)rotate(-90)">9</text><text transform="translate(775 243)rotate(-90)">10</text><text transform="translate(792 243)rotate(-90)">11</text><text transform="translate(808 243)rotate(-90)">12</text><text transform="translate(824 243)rotate(-90)">13</text><text transform="translate(840 243)rotate(-90)">14</text></g>
<path d="M665 245V313H650M682 245V329H650M698 245V346H650M796 245V379H650M812 245V395H650M828 245V410H650M844 245V427H650M450 313H510M450 329H510M455 366V410H510M510 395H488V427H510" class="wire"/>
<rect x="535" y="296" width="99" height="147" fill="#cbc8aa" stroke="#8a231c" stroke-width="4"/><path d="M505 313H535M505 329H535M505 361H535M505 395H535M505 410H535M505 427H535M634 313H664M634 329H664M634 346H664M634 361H664M634 379H664M634 395H664M634 410H664M634 427H664" class="pin"/>
<circle cx="445" cy="313" r="5.500" class="term"/><circle cx="445" cy="329" r="5.500" class="term"/><path d="M455 362l-8 15h16z" class="wire"/><circle cx="488" cy="410" r="5" fill="#154715"/>
<text x="534" y="291" font-size="20">U1</text><text x="534" y="457" font-size="14" textLength="67">PCF8574A</text>
<g font-size="14"><text x="543" y="318">SCL<tspan x="543" dy="16">SDA</tspan><tspan x="543" dy="32">INT</tspan><tspan x="543" dy="34">A0</tspan><tspan x="543" dy="16">A1</tspan><tspan x="543" dy="16">A2</tspan></text><text x="609" y="318">P0<tspan x="609" dy="16">P1</tspan><tspan x="609" dy="16">P2</tspan><tspan x="609" dy="16">P3</tspan><tspan x="609" dy="17">P4</tspan><tspan x="609" dy="16">P5</tspan><tspan x="609" dy="16">P6</tspan><tspan x="609" dy="16">P7</tspan></text><text x="506" y="309">14<tspan x="506" dy="16">15</tspan><tspan x="506" dy="32">13</tspan><tspan x="512" dy="34">1</tspan><tspan x="512" dy="16">2</tspan><tspan x="512" dy="16">3</tspan></text><text x="650" y="309">4<tspan x="650" dy="16">5</tspan><tspan x="650" dy="16">6</tspan><tspan x="650" dy="16">7</tspan><tspan x="650" dy="17">9</tspan><tspan x="650" dy="16">10</tspan><tspan x="650" dy="16">11</tspan><tspan x="650" dy="16">12</tspan></text><text x="421" y="318">g<tspan x="421" dy="16">h</tspan></text></g>
</g>
<g transform="translate(610 500)scale(.33333)"><use href="#led" x="119" y="149"/><use href="#led" x="314" y="149"/><path d="M119 370H314M217 370V451" class="wire"/><use href="#gnd" x="217" y="451"/><circle cx="217" cy="370" r="5" fill="#154715"/></g>
</svg>
</section>
</main>

<footer class="status">
<svg class="play" viewBox="0 0 110 24"><defs><linearGradient id="pb" x2="1" y2="1"><stop stop-color="#1b78e8"/><stop offset="1" stop-color="#0713b8"/></linearGradient></defs><path d="M5 5l16 8-16 8zM34 5h2.500v16H34zM38.500 5l12 8-12 8zM66 5h4v16h-4zM73 5h4v16h-4zM93 5h16v16H93z" fill="url(#pb)"/></svg>
<b></b>
<svg class="info" viewBox="0 0 16 16"><circle cx="8" cy="8" r="7.500" fill="#858a8c"/><path d="M8 3v2M8 7v6M6 13h4" stroke="#fff" stroke-width="2"/></svg>
<span class="nomsg">No Messages</span><b></b><b></b>
<span class="msg">Redo the last undone operation.</span><b></b><b></b>
</footer>
</body>
</html>
```
FILE: styles.css
```css
*{box-sizing:border-box}
body{margin:0;width:1280px;height:720px;overflow:hidden;display:flex;flex-direction:column;background:#e3ebf1;font-family:"Liberation Sans",Arial,sans-serif;color:#111}
i{font-style:normal}
.defs{position:absolute}
.titlebar{height:20px;flex:none;background:#f3f3f3;display:flex;align-items:center}
.appicon{width:9px;height:9px;margin-left:4px}
.titlebar h1{margin:0 0 0 6px;font:10px "Open Sans","Noto Sans",sans-serif;letter-spacing:-.25px;white-space:nowrap;color:#222}
.winbtns{width:100px;height:20px;margin-left:auto;margin-right:10px}
.menu{height:15px;flex:none;background:#fff;display:flex;font:10.300px "Open Sans","Noto Sans",sans-serif;line-height:16px;letter-spacing:-.3px;padding-left:6px}
.menu span{flex:none;width:43px}
.menu span:nth-child(1){width:28px}
.menu span:nth-child(2){width:29px}
.menu span:nth-child(3){width:33px}
.menu span:nth-child(4){width:32px}
.menu span:nth-child(5){width:42px}
.menu span:nth-child(6){width:39px}
.menu span:nth-child(7),.menu span:nth-child(8){width:42px}
.menu span:nth-child(9){width:53px}
.toolbars{height:25px;flex:none;display:flex;background:#e6edf2}
.tb{height:25px;flex:none;display:flex;align-items:center;background:linear-gradient(#e9f3f9,#cfe5f2 60%,#b8d6e6);border-right:1px solid #c3d7e3;position:relative}
.tb::before{content:"";position:absolute;left:3px;top:5px;height:15px;border-left:1px dotted #8dabc0}
.tb i{width:21.500px;height:22px;flex:none;display:flex;align-items:center;justify-content:center}
.tb i svg{width:15px;height:15px;overflow:visible}
.tb b{width:4.500px;height:17px;flex:none;border-left:1px solid #a9c0cf}
.tb .on,.tg .on{background:#bcd8ec;border:1px solid #8ab0cb}
.g1{width:318px;padding-left:7.250px;margin-right:3px}
.g2{width:191px;padding-left:8.250px;margin-right:3px}
.g3{width:303px;padding-left:7.250px;margin-right:2px}
.g4{width:175px;padding-left:7.250px}
.tabs{height:27px;flex:none;position:relative;background:#e4eaf0}
.tabshape{position:absolute;inset:0;width:1280px;height:27px}
.tab{position:relative;height:25px;display:flex;align-items:center;padding-left:16px}
.tab svg{width:12px;height:14px}
.tab strong{font-size:9.800px;color:#31526c;margin-left:4px;width:87px;white-space:nowrap;letter-spacing:-.07px}
.tab .x{width:10px;height:10px;margin-left:8px}
main{height:608px;flex:none;display:flex;background:#c4def0}
.tools{width:25px;flex:none;background:#e1e9ef}
.tg{width:25px;padding-top:7px;height:455px;background:linear-gradient(90deg,#eaf5fd,#b9d7ec);border-top:1px dotted #98b7cc}
.tg i{width:24px;height:20px;display:flex;align-items:center;justify-content:center}
.tg i svg{width:15px;height:15px;overflow:visible}
.tg b{display:block;height:2px;margin-bottom:.5px;border-top:1px solid #a9c6db;background:#f4fbff}
.serif{font-family:"Liberation Serif","Times New Roman",serif}
.t2{height:108px;margin-top:2px;padding-top:8px}
.angle{height:14px;margin:-1px 1px 4px 0;border:1px solid #555;border-right:0;border-bottom-color:#ccc;background:#fff;font-size:9px;line-height:12px;color:#444}
.panel{width:82px;flex:none;padding:1px 1px 0 1px}
.overview{display:block;width:80px;height:67px;border:1px solid #78898f}
.ports{margin-top:3px;height:537px;border:1px solid #717c82;background:#fff}
.ph{height:15px;background:linear-gradient(#e9f3fa,#c7dfef);display:flex;align-items:center;font-size:9.500px}
.ph em{font-style:normal;font-size:9px;background:#0755c9;color:#fff;width:10px;height:11px;line-height:11px;text-align:center;border-radius:1px;margin-left:1px}
.ph span{margin-left:19px}
.ports ul{list-style:none;margin:0;padding:0}
.ports li{height:10.700px;line-height:11px;font-size:9.800px;padding-left:1px;color:#1b1b2b}
.ports .sel{background:#0874d2;color:#e6f4ff}
.canvas{flex:1;margin-left:2px;background:#dfdfcf;overflow:hidden;box-shadow:-1px 0 #72838b}
.sheet{display:block;width:1171px;height:608px}
.sheet text{font-family:"Liberation Sans",Arial,sans-serif;fill:#242420}
.wire{fill:none;stroke:#1c551c;stroke-width:2.700}
.pin{fill:none;stroke:#812424;stroke-width:2.700}
.term{fill:#dfdfcf;stroke:#1c551c;stroke-width:2.200}
.frame{fill:none;stroke:#4040cc;stroke-width:1}
.sheet .big text{fill:#1818b5}
.sw,.sw text,.sheet .sw,.sheet .sw text{fill:#f5ffff}
.heavy{stroke:#fff;stroke-width:.7}
.sheet .chip text{fill:#9d9723}
.b{font-weight:bold}
.sheet .key text{font-size:32px;font-weight:bold;text-anchor:middle;fill:#111}
.sheet .key .star{font-size:56px}
.status{height:25px;flex:none;display:flex;align-items:center;background:linear-gradient(#e5f2fa,#c2deee);border-top:1px solid #d8e5ed;font-size:9.500px}
.status .play{width:110px;height:24px;margin-left:9px}
.status b{width:1px;height:20px;background:#91afc2;box-shadow:1px 0 #fff;margin-left:11px}
.status .info{width:15px;height:15px;margin-left:4px}
.nomsg{width:59px;margin-left:3px;color:#8c969b;white-space:nowrap;letter-spacing:-.1px}
.status .nomsg+b{margin-left:2px}
.status b+b{margin-left:4px}
.msg{width:266px;margin-left:5px;white-space:nowrap;letter-spacing:-.25px}
.status .msg+b{margin-left:0}
```
